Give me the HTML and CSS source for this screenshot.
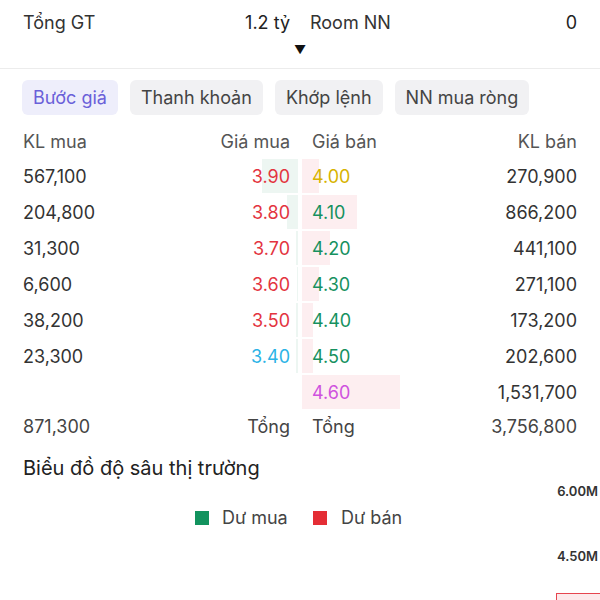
FILE: index.html
```html
<!DOCTYPE html>
<html lang="vi">
<head>
    <meta charset="UTF-8">
    <meta name="viewport" content="width=device-width, initial-scale=1.0">
    <title>Bước giá</title>
    <link rel="stylesheet" href="styles.css">
</head>
<body>
    <header class="summary">
        <div class="summary-row">
            <div class="half">
                <span>Tổng GT</span>
                <span class="value">1.2 tỷ</span>
            </div>
            <div class="half">
                <span>Room NN</span>
                <span class="value">0</span>
            </div>
        </div>
        <div class="toggle">&#9660;</div>
    </header>

    <nav class="tabs">
        <a class="tab active" href="#">Bước giá</a>
        <a class="tab" href="#">Thanh khoản</a>
        <a class="tab" href="#">Khớp lệnh</a>
        <a class="tab" href="#">NN mua ròng</a>
    </nav>

    <section class="book">
        <div class="row head">
            <div class="half buy">
                <span>KL mua</span>
                <span class="price">Giá mua</span>
            </div>
            <div class="half sell">
                <span class="price">Giá bán</span>
                <span>KL bán</span>
            </div>
        </div>

        <div class="row">
            <div class="half buy"><i class="bar" style="width: 36px"></i><span>567,100</span><span class="price red">3.90</span></div>
            <div class="half sell"><i class="bar" style="width: 17px"></i><span class="price yellow">4.00</span><span>270,900</span></div>
        </div>
        <div class="row">
            <div class="half buy"><i class="bar" style="width: 11px"></i><span>204,800</span><span class="price red">3.80</span></div>
            <div class="half sell"><i class="bar" style="width: 55px"></i><span class="price green">4.10</span><span>866,200</span></div>
        </div>
        <div class="row">
            <div class="half buy"><i class="bar" style="width: 2px"></i><span>31,300</span><span class="price red">3.70</span></div>
            <div class="half sell"><i class="bar" style="width: 28px"></i><span class="price green">4.20</span><span>441,100</span></div>
        </div>
        <div class="row">
            <div class="half buy"><i class="bar" style="width: 1px"></i><span>6,600</span><span class="price red">3.60</span></div>
            <div class="half sell"><i class="bar" style="width: 17px"></i><span class="price green">4.30</span><span>271,100</span></div>
        </div>
        <div class="row">
            <div class="half buy"><i class="bar" style="width: 2px"></i><span>38,200</span><span class="price red">3.50</span></div>
            <div class="half sell"><i class="bar" style="width: 11px"></i><span class="price green">4.40</span><span>173,200</span></div>
        </div>
        <div class="row">
            <div class="half buy"><i class="bar" style="width: 2px"></i><span>23,300</span><span class="price cyan">3.40</span></div>
            <div class="half sell"><i class="bar" style="width: 11px"></i><span class="price green">4.50</span><span>202,600</span></div>
        </div>
        <div class="row">
            <div class="half buy"><span></span><span class="price"></span></div>
            <div class="half sell"><i class="bar" style="width: 98px"></i><span class="price purple">4.60</span><span>1,531,700</span></div>
        </div>

        <div class="row total">
            <div class="half buy">
                <span>871,300</span>
                <span class="price">Tổng</span>
            </div>
            <div class="half sell">
                <span class="price">Tổng</span>
                <span>3,756,800</span>
            </div>
        </div>
    </section>

    <section class="depth">
        <h2>Biểu đồ độ sâu thị trường</h2>
        <svg class="chart" width="600" height="122" viewBox="0 0 600 122">
            <text class="axis" x="598" y="14" text-anchor="end">6.00M</text>
            <text class="axis" x="598" y="79" text-anchor="end">4.50M</text>
            <rect x="195" y="29" width="14" height="14" fill="#12935e"></rect>
            <text class="legend" x="222" y="42">Dư mua</text>
            <rect x="313" y="29" width="14" height="14" fill="#e42d35"></rect>
            <text class="legend" x="341" y="42">Dư bán</text>
            <rect x="556.5" y="111.5" width="50" height="20" fill="#fde9eb" stroke="#e6454f"></rect>
        </svg>
    </section>
</body>
</html>
```

FILE: styles.css
```css
/* Reset */
* {
    margin: 0;
    padding: 0;
    box-sizing: border-box;
}

body {
    background-color: #fff;
    color: #333;
    font-family: Inter, "Noto Sans", sans-serif;
    font-size: 18px;
    width: 600px;
    height: 600px;
    overflow: hidden;
}

/* Top summary */
.summary {
    border-bottom: 1px solid #ececec;
    height: 69px;
}

.summary-row {
    display: grid;
    grid-template-columns: 1fr 1fr;
    column-gap: 20px;
    padding: 10px 23px 0;
    height: 34px;
    align-items: center;
}

.half {
    display: flex;
    justify-content: space-between;
    align-items: center;
}

.summary .value {
    color: #222;
}

.toggle {
    text-align: center;
    font-size: 12px;
    color: #111;
    line-height: 14px;
    margin-top: 9px;
}

/* Tabs */
.tabs {
    display: flex;
    gap: 12px;
    padding: 11px 22px 0;
}

.tab {
    display: block;
    height: 35px;
    line-height: 35px;
    padding: 0 11px;
    border-radius: 6px;
    background-color: #f1f1f3;
    color: #444;
    text-decoration: none;
}

.tab.active {
    background-color: #eeeefb;
    color: #6a60d9;
}

/* Order book */
.book {
    padding: 11px 23px 0;
}

.row {
    display: grid;
    grid-template-columns: 1fr 1fr;
    column-gap: 4px;
    height: 36px;
    padding: 2px 0;
}

.row .half {
    position: relative;
    height: 34px;
}

.row .half span {
    position: relative;
}

.buy .price {
    padding-right: 8px;
}

.sell .price {
    padding-left: 10px;
}

.bar {
    position: absolute;
    top: 0;
    bottom: 0;
}

.buy .bar {
    right: 0;
    background-color: #edf6f2;
}

.sell .bar {
    left: 0;
    background-color: #fdeef0;
}

.row.head {
    height: 31px;
    padding: 0;
    color: #555;
}

.row.head .half {
    height: 31px;
}

.row.total {
    height: 34px;
    padding: 0;
    color: #444;
}

.red { color: #e3343f; }
.green { color: #16915f; }
.yellow { color: #d7b300; }
.cyan { color: #2bb3e6; }
.purple { color: #cf52de; }

/* Depth chart */
.depth h2 {
    font-size: 20px;
    font-weight: 400;
    color: #222;
    padding: 11px 23px 0;
    line-height: 28px;
}

.chart {
    display: block;
}

.chart .axis {
    font-family: Inter, sans-serif;
    font-size: 13px;
    font-weight: 600;
    fill: #333;
}

.chart .legend {
    font-family: Inter, sans-serif;
    font-size: 18px;
    fill: #444;
}
```
